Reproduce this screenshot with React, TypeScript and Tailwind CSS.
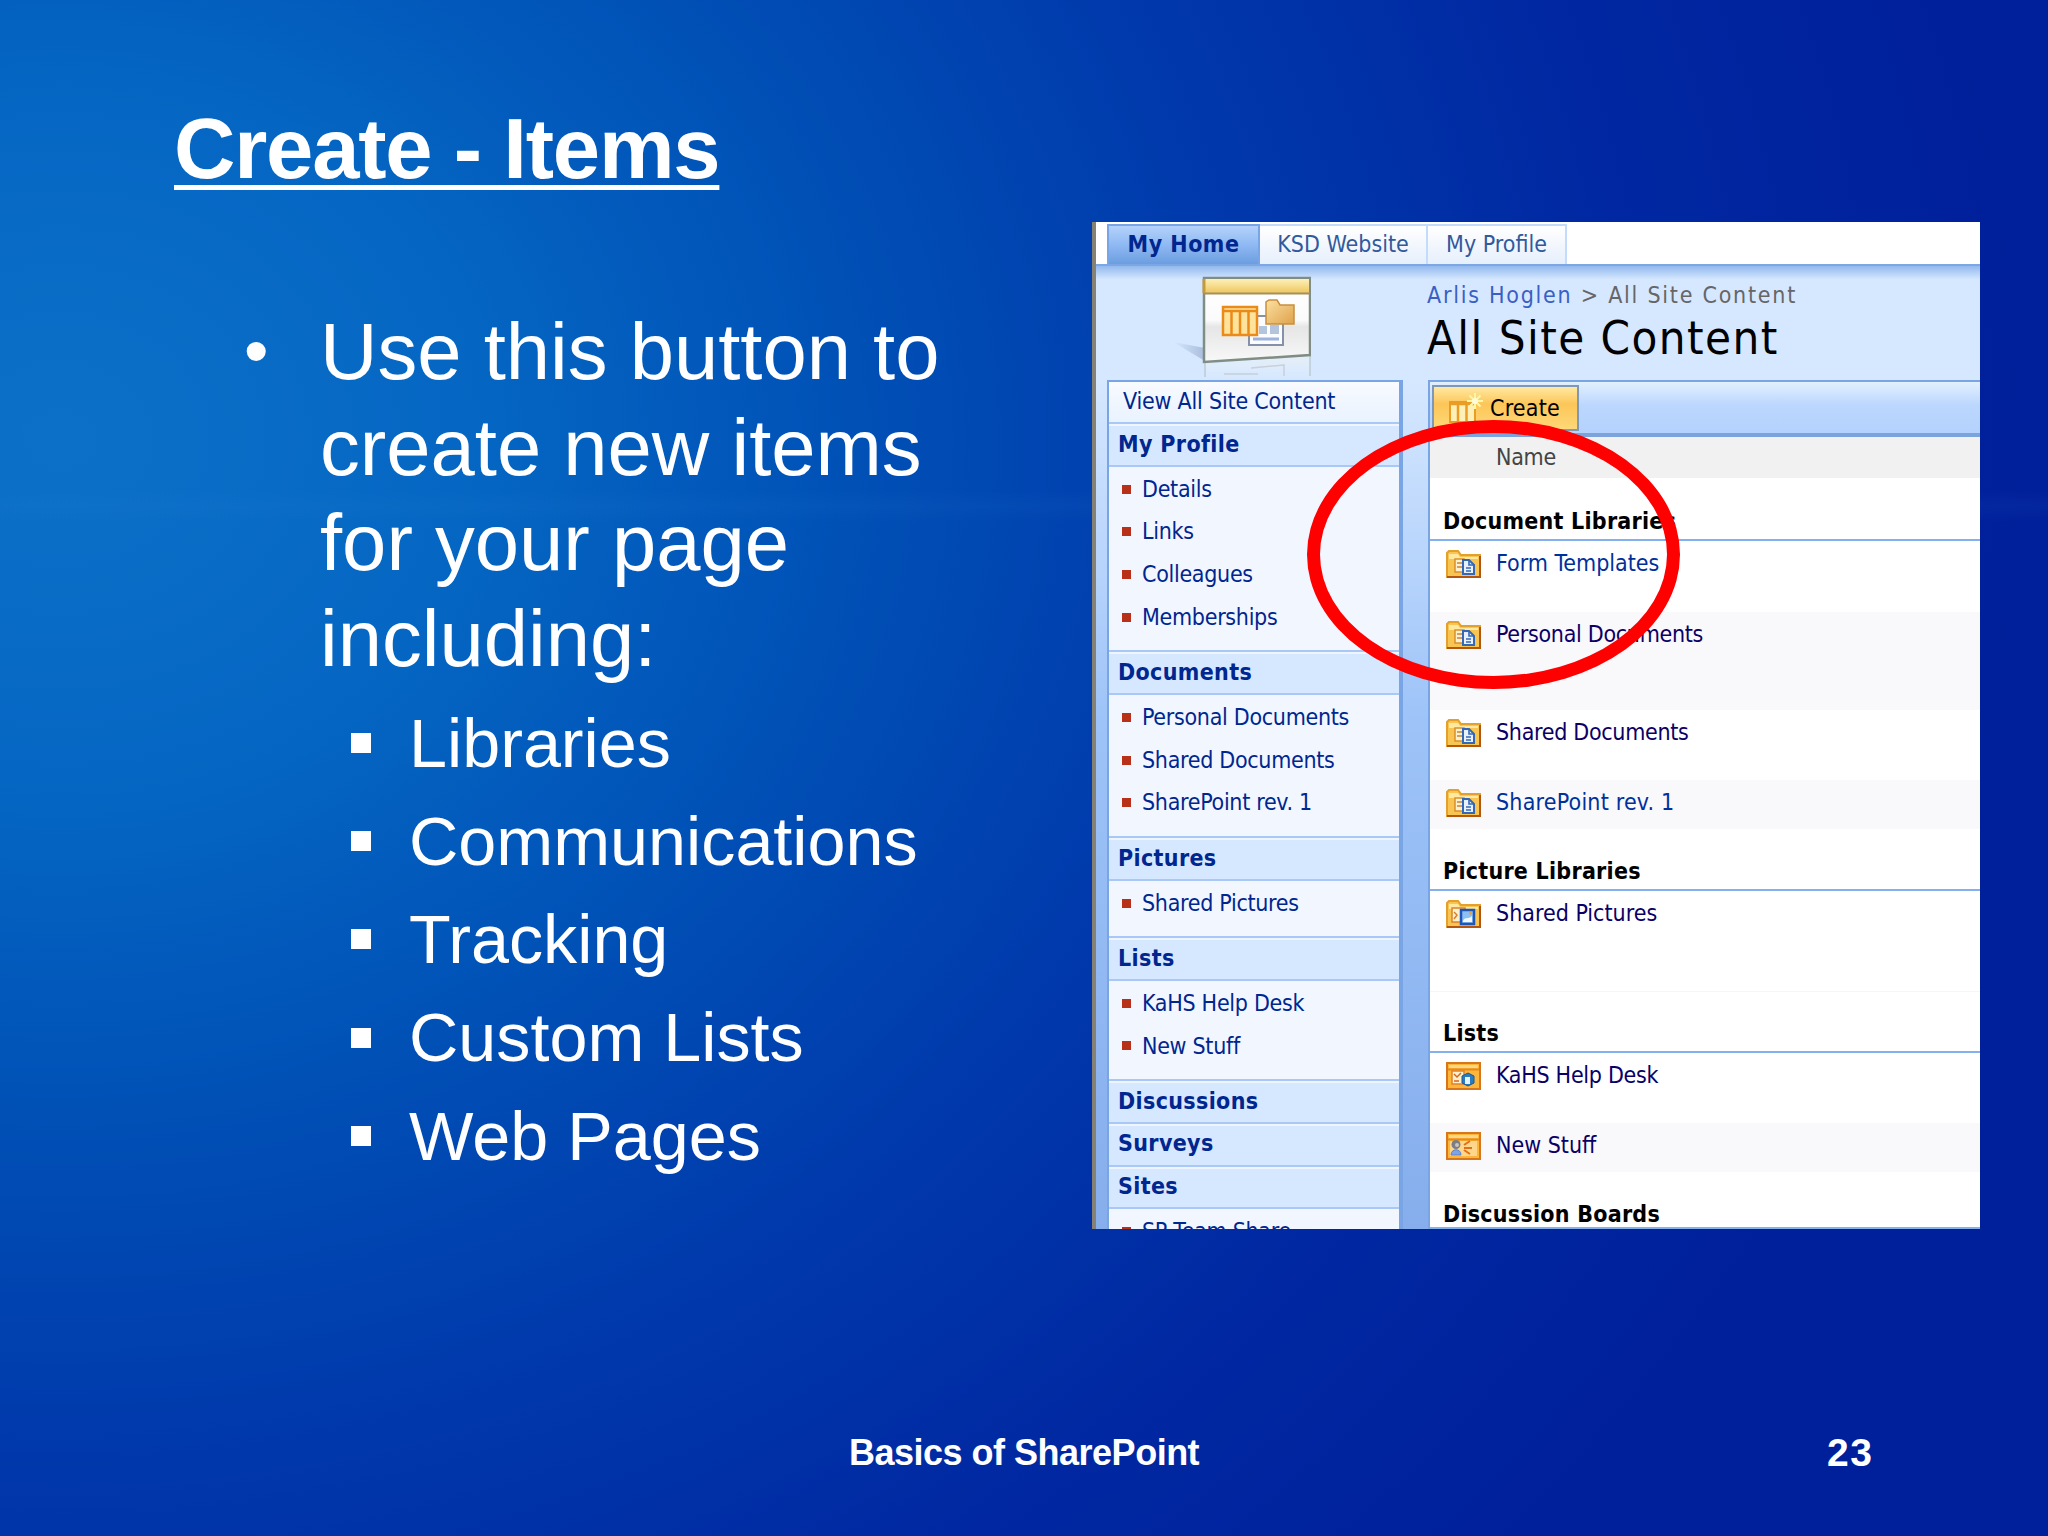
import React from 'react';

type IconKind = 'doc' | 'picture' | 'tasks' | 'announce';

interface NavSection {
  title: string;
  items: string[];
}

interface ContentRow {
  icon: IconKind;
  label: string;
  className: string;
}

const bullets = ['Libraries', 'Communications', 'Tracking', 'Custom Lists', 'Web Pages'];

const navSections: NavSection[] = [
  { title: 'My Profile', items: ['Details', 'Links', 'Colleagues', 'Memberships'] },
  { title: 'Documents', items: ['Personal Documents', 'Shared Documents', 'SharePoint rev. 1'] },
  { title: 'Pictures', items: ['Shared Pictures'] },
  { title: 'Lists', items: ['KaHS Help Desk', 'New Stuff'] },
  { title: 'Discussions', items: [] },
  { title: 'Surveys', items: [] },
  { title: 'Sites', items: ['SP Team Share'] },
];

const libraries: ContentRow[] = [
  { icon: 'doc', label: 'Form Templates', className: 'h-[71px] tracking-normal text-[#00309c]' },
  { icon: 'doc', label: 'Personal Documents', className: 'h-[98px] bg-[#f9f8fb] text-[#0a0066]' },
  { icon: 'doc', label: 'Shared Documents', className: 'h-[70px] text-[#0a0066]' },
  { icon: 'doc', label: 'SharePoint rev. 1', className: 'h-[49px] bg-[#f9f8fb] tracking-[0.2px] text-[#00309c]' },
];

const pictures: ContentRow[] = [
  { icon: 'picture', label: 'Shared Pictures', className: 'h-[100px] tracking-normal text-[#0a0066]' },
];

const lists: ContentRow[] = [
  { icon: 'tasks', label: 'KaHS Help Desk', className: 'h-[70px] text-[#0a0066]' },
  { icon: 'announce', label: 'New Stuff', className: 'h-[49px] bg-[#f9f8fb] tracking-normal text-[#0a0066]' },
];

const ListIcon: React.FC<{ kind: IconKind }> = ({ kind }) => {
  const folder = kind === 'doc' || kind === 'picture';
  return (
    <svg className="h-7 w-[35px] shrink-0" viewBox="0 0 35 28">
      {folder ? (
        <>
          <path d="M1 27V3L3 1H12L15 5H34V27Z" fill="#f9c552" stroke="#e3a02c" strokeWidth="2" />
          <path d="M3 4H12L14 7H32V9H3Z" fill="#ffe9a0" />
          <path d="M1 27H34V6" fill="none" stroke="#b4560e" strokeWidth="2" />
        </>
      ) : (
        <>
          <rect x="1" y="1" width="33" height="26" fill="#fdb53a" stroke="#d8761c" strokeWidth="2" />
          <rect x="3" y="3" width="29" height="3" fill="#ffd683" />
          <path d="M2 7.5H33" stroke="#e58a1f" strokeWidth="2" />
        </>
      )}
      {kind === 'doc' && (
        <>
          <path d="M9 9H18V22H9Z" fill="#fff1cf" stroke="#d9902b" strokeWidth="1.5" />
          <path d="M11 13H16M11 17H16" stroke="#c98330" strokeWidth="1.5" />
          <path d="M17 10H23L28 15V24H17Z" fill="#e8f2ff" stroke="#3568b4" strokeWidth="2" />
          <path d="M23 10V15H28M20 18H25M20 21H25" fill="none" stroke="#3568b4" strokeWidth="1.6" />
        </>
      )}
      {kind === 'picture' && (
        <>
          <rect x="6" y="8" width="13" height="14" fill="#fff1cf" stroke="#d9822b" strokeWidth="1.5" />
          <path d="M8 12L11 15L8 19" fill="none" stroke="#d9822b" strokeWidth="1.5" />
          <rect x="15" y="10" width="13" height="14" fill="#8cc0f5" stroke="#1f55b5" strokeWidth="2.5" />
          <path d="M17 21C19 16 22 20 26 16V22H17Z" fill="#f4f9ff" />
          <circle cx="24.5" cy="13" r="1.6" fill="#f0a030" />
        </>
      )}
      {kind === 'tasks' && (
        <>
          <path d="M6 9H18V22H6Z" fill="#fff1cf" stroke="#e0832a" strokeWidth="1.5" />
          <path d="M8 12L11 15L15 11M8 19H13" fill="none" stroke="#d3691e" strokeWidth="1.5" />
          <path d="M16 14L22 11L28 14V21L22 24L16 21Z" fill="#2a7cc0" stroke="#1b5796" />
          <rect x="19" y="15" width="5" height="7" fill="#e3f3ff" />
        </>
      )}
      {kind === 'announce' && (
        <>
          <rect x="4" y="9" width="27" height="15" fill="#ffd78a" />
          <circle cx="10" cy="12.5" r="4.5" fill="#7d7d86" />
          <circle cx="11" cy="13" r="2" fill="#c9c6c0" />
          <path d="M5 23C5 16 15 16 15 23Z" fill="#7ea4e8" stroke="#5e82c8" />
          <path d="M18 13L24 9M18 16H26M18 18L24 22" stroke="#e0701a" strokeWidth="2" />
        </>
      )}
    </svg>
  );
};

const SiteIcon: React.FC = () => (
  <svg className="h-[102px] w-[140px]" viewBox="0 0 140 102">
    <defs>
      <linearGradient id="frame" x1="0" y1="0" x2="0" y2="1">
        <stop offset="0" stopColor="#fff" />
        <stop offset="0.5" stopColor="#fbfbfb" />
        <stop offset="0.58" stopColor="#e6e6e6" />
        <stop offset="1" stopColor="#f8f8f8" />
      </linearGradient>
      <linearGradient id="bar" x1="0" y1="0" x2="0" y2="1">
        <stop offset="0" stopColor="#fdf0b8" />
        <stop offset="1" stopColor="#eec760" />
      </linearGradient>
      <linearGradient id="folder" x1="0" y1="0" x2="1" y2="1">
        <stop offset="0" stopColor="#fbe0a0" />
        <stop offset="1" stopColor="#dfa24c" />
      </linearGradient>
      <linearGradient id="mirror" x1="0" y1="0" x2="0" y2="1">
        <stop offset="0" stopColor="#e6eff6" />
        <stop offset="1" stopColor="#d6e8ff" />
      </linearGradient>
      <linearGradient id="shade" x1="0" y1="0" x2="1" y2="0">
        <stop offset="0" stopColor="#d6e8ff" />
        <stop offset="1" stopColor="#a9bddb" />
      </linearGradient>
    </defs>
    <path d="M2 66L34 72V85Z" fill="url(#shade)" />
    <path d="M34 88L139 79V102H34Z" fill="url(#mirror)" />
    <path d="M34 87V101M139 80V100" stroke="#bccbd4" strokeWidth="1.5" />
    <path d="M53 98H87M80 92L113 89V100" fill="none" stroke="#c8d0da" strokeWidth="1.5" />
    <path d="M33 2H139V79L33 86Z" fill="url(#frame)" stroke="#7f8d84" strokeWidth="2.5" />
    <path d="M34 3H138V17H34Z" fill="url(#bar)" />
    <path d="M33 17.5H139" stroke="#a4905e" strokeWidth="2" />
    <path d="M33 3V17" stroke="#c49a3c" strokeWidth="3" />
    <rect x="78" y="40" width="34" height="29" fill="#fbfcff" stroke="#8491a8" strokeWidth="2" />
    <path d="M88 58V50H96V58ZM99 58V49H108V58Z" fill="#b4c4dd" />
    <path d="M82 63H108" stroke="#9db2dc" strokeWidth="3" />
    <rect x="52" y="31" width="34" height="28" fill="#ffe39c" stroke="#ea8a18" strokeWidth="2.5" />
    <path d="M52 35H86M60.5 35V59M69 35V59M77.5 35V59" stroke="#ea8a18" strokeWidth="2.5" />
    <path d="M95 48V26L98 24H106L109 29H123V48Z" fill="url(#folder)" stroke="#c88f3c" strokeWidth="1.5" />
  </svg>
);

const CreateIcon: React.FC = () => (
  <svg className="h-[30px] w-9" viewBox="0 0 36 30">
    <rect x="2" y="9" width="25" height="20" fill="#fff0b8" stroke="#eb9c24" strokeWidth="2" />
    <path d="M2 11H27M10 11V29M18.5 11V29" stroke="#eb9c24" strokeWidth="2.5" />
    <path d="M27 0V16M19 8H35M21.5 2.5L32.5 13.5M32.5 2.5L21.5 13.5" stroke="#fff7a8" strokeWidth="2" />
    <circle cx="27" cy="8" r="3" fill="#fffbd8" />
  </svg>
);

const Group: React.FC<{ title: string; rows: ContentRow[]; className: string }> = ({ title, rows, className }) => (
  <div>
    <div className={`flex items-end border-b-2 border-[#84b1ee] pl-[13px] font-bold text-black ${className}`}>
      <span className="leading-[26px] tracking-[0.25px]">{title}</span>
    </div>
    {rows.map((row) => (
      <div key={row.label} className={`flex items-start pl-4 pt-[9px] ${row.className}`}>
        <ListIcon kind={row.icon} />
        <span className="ml-[15px] leading-[27px]">{row.label}</span>
      </div>
    ))}
  </div>
);

const SharePointWindow: React.FC = () => (
  <div className="h-[1007px] w-[888px] overflow-hidden border-l-4 border-[#858275] bg-[#d6e8ff] font-['DejaVu_Sans_Condensed','DejaVu_Sans',sans-serif] text-[23px] tracking-[-0.3px] [font-stretch:condensed]">
    {/* Top tabs */}
    <div className="flex h-[44px] border-b-2 border-[#7ba7e4] bg-white pl-[11px] pt-[2px] text-[#32599c]">
      <div className="flex w-[153px] items-center justify-center border-2 border-b-0 border-[#77a5e6] bg-linear-to-b from-[#b4d2fb] via-[#8fb9f3] to-[#6c9de0] pb-[2px] font-bold tracking-[0.5px] text-[#00268f]">My Home</div>
      <div className="flex w-[168px] items-center justify-center border-r-2 border-t-2 border-[#c4dcfb] bg-linear-to-b from-white to-[#e6effc] pb-[2px] tracking-normal">KSD Website</div>
      <div className="flex w-[139px] items-center justify-center border-r-2 border-t-2 border-[#c4dcfb] bg-linear-to-b from-white to-[#e6effc] pb-[2px] tracking-normal">My Profile</div>
    </div>

    {/* Header */}
    <div className="flex h-[114px] bg-linear-to-b from-[#93b9ee] via-[#d6e8ff] via-12% to-[#d6e8ff]">
      <div className="w-[331px] pl-[75px] pt-[10px]">
        <SiteIcon />
      </div>
      <div className="pt-[12px]">
        <div className="whitespace-nowrap text-[23px] leading-[34px] tracking-[1.75px] text-[#666]">
          <span className="text-[#3a5fc4]">Arlis Hoglen</span> &gt; All Site Content
        </div>
        <div className="whitespace-nowrap text-[47px] leading-[52px] tracking-[1.45px] text-black">All Site Content</div>
      </div>
    </div>

    <div className="flex h-[849px] bg-linear-to-b from-[#d6e8ff] via-[#9dc3f8] via-40% to-[#86aeec]">
      {/* Quick launch */}
      <div className="ml-[11px] w-[296px] shrink-0 border-l-2 border-r-4 border-t-2 border-[#7aa5e4] bg-[#f2f7ff] text-[#00268f]">
        <div className="flex h-[42px] items-center border-b-2 border-b-[#a9c8f5] bg-linear-to-b from-[#f8fbff] to-[#e9f2ff] pb-px pl-[14px] tracking-[-0.2px]">View All Site Content</div>
        {navSections.map((section) => (
          <div key={section.title}>
            <div className="flex h-[42.7px] items-center border-y-2 border-b-[#a9c8f5] border-t-[#eef5ff] bg-[#d6e8ff] pb-[3px] pl-[9px] font-bold tracking-[0.35px]">{section.title}</div>
            {section.items.length > 0 && (
              <div className="border-b-2 border-[#a9c8f5] pb-[11.9px] pt-px">
                {section.items.map((item) => (
                  <div key={item} className="flex h-[42.7px] items-center">
                    <span className="ml-[13px] mr-[11px] size-[9px] bg-[#b93018]" />
                    {item}
                  </div>
                ))}
              </div>
            )}
          </div>
        ))}
      </div>

      {/* Site content */}
      <div className="ml-[25px] min-w-0 flex-1 border-l-2 border-t-2 border-[#7aa5e4] bg-white">
        <div className="flex h-[55px] border-b-4 border-[#7ba4dd] bg-linear-to-b from-[#e2f0ff] via-[#bcd7fd] via-45% to-[#b4d2fd] pl-[2px] pt-[3px]">
          <div className="flex h-[46px] w-[147px] items-center border-2 border-[#7d98b8] bg-linear-to-b from-[#ffe9a0] via-[#fcc658] via-40% to-[#ffd877] pl-[14px] text-black">
            <CreateIcon />
            <span className="ml-[6px] tracking-[0.2px]">Create</span>
          </div>
        </div>
        <div className="flex h-[41px] items-center bg-[#f1f1f1] pl-[66px] text-[#444]">Name</div>
        <Group title="Document Libraries" rows={libraries} className="h-[63px] pb-[5px]" />
        <Group title="Picture Libraries" rows={pictures} className="h-[62px] pb-[5px]" />
        <Group title="Lists" rows={lists} className="h-[62px] border-t border-t-[#f6f6f6] pb-[5px]" />
        <Group title="Discussion Boards" rows={[]} className="h-[57px]" />
      </div>
    </div>
  </div>
);

const App: React.FC = () => (
  <div className="relative flex h-[1536px] w-[2048px] flex-col overflow-hidden bg-[#001f98] bg-[linear-gradient(to_bottom,transparent_490px,#3c8ce010_506px,transparent_522px),radial-gradient(ellipse_2000px_1700px_at_60px_440px,#0c70c8_0%,#0567c3_20%,#0050b6_40%,#003aac_58%,#0028a2_78%,#001f9a_100%)] font-['Liberation_Sans',Arial,sans-serif] text-white">
    <h1 className="h-[222px] shrink-0 pl-[174px] pt-[100px] text-[85px] font-bold leading-[98px] tracking-[-1.2px] underline decoration-[5px] underline-offset-[7px] [text-decoration-skip-ink:none]">
      Create - Items
    </h1>

    <div className="flex h-[1007px] shrink-0">
      <div className="w-[1092px] pl-[242px] pt-[82px]">
        <div className="flex text-[79.6px] leading-[95.5px]">
          <span className="w-[78px] pl-[2px] text-[70px]">•</span>
          <p>
            Use this button to
            <br />
            create new items
            <br />
            for your page
            <br />
            including:
          </p>
        </div>
        <ul className="pl-[109px] pt-[8px] text-[68.3px]">
          {bullets.map((bullet) => (
            <li key={bullet} className="flex h-[98.2px] items-center">
              <span className="mr-[38px] size-5 bg-white" />
              {bullet}
            </li>
          ))}
        </ul>
      </div>
      <SharePointWindow />
    </div>

    <footer className="flex pl-[849px] pt-[201px] text-[36px] font-bold leading-[46px]">
      <span className="w-[978px] tracking-[-0.5px]">Basics of SharePoint</span>
      <span className="text-[39px] tracking-[1.5px]">23</span>
    </footer>

    {/* Callout ring */}
    <div className="absolute left-[1307px] top-[420px] h-[269px] w-[373px] rounded-[50%] border-[13px] border-[#ff0000]" />
  </div>
);

export default App;
